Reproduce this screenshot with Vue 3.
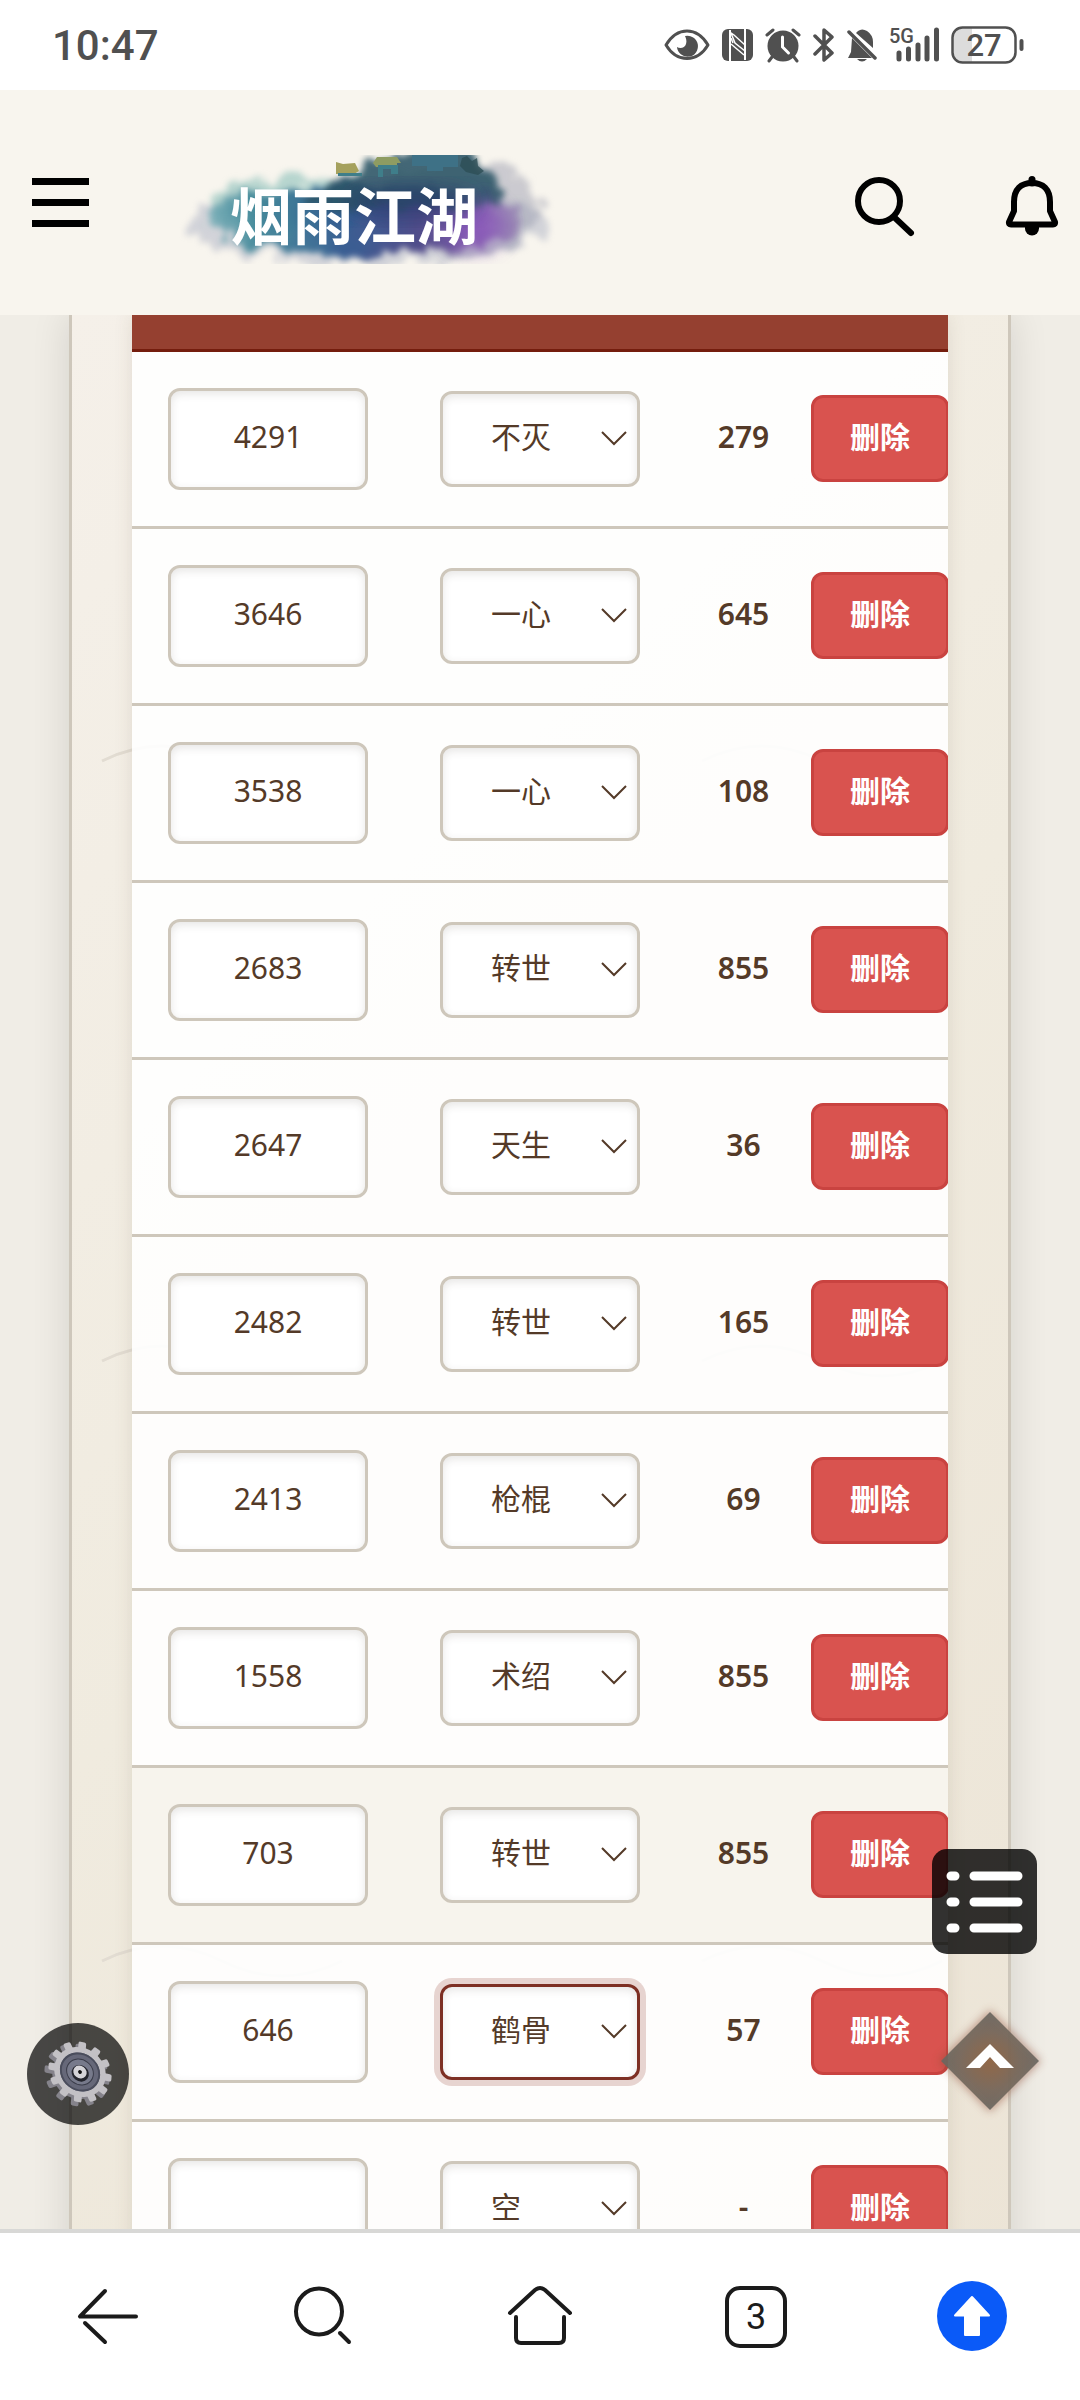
<script setup>
import { reactive, ref } from 'vue';

const options = ['空', '不灭', '一心', '转世', '天生', '枪棍', '术绍', '鹤骨'];

const rows = reactive([
    { id: 1, amount: '4291', kind: '不灭', cost: '279' },
    { id: 2, amount: '3646', kind: '一心', cost: '645' },
    { id: 3, amount: '3538', kind: '一心', cost: '108' },
    { id: 4, amount: '2683', kind: '转世', cost: '855' },
    { id: 5, amount: '2647', kind: '天生', cost: '36' },
    { id: 6, amount: '2482', kind: '转世', cost: '165' },
    { id: 7, amount: '2413', kind: '枪棍', cost: '69' },
    { id: 8, amount: '1558', kind: '术绍', cost: '855' },
    { id: 9, amount: '703', kind: '转世', cost: '855' },
    { id: 10, amount: '646', kind: '鹤骨', cost: '57' },
    { id: 11, amount: '', kind: '空', cost: '-' },
]);

const hoveredId = ref(9);
const focusedId = ref(10);

const teeth = Array.from({ length: 12 }, (_, i) => i * 30);

const removeRow = (id) => {
    const index = rows.findIndex((row) => row.id === id);
    if (index !== -1) rows.splice(index, 1);
};
</script>

<template>
    <div class="screen">
        <div class="status-bar">
            <span class="clock">10:47</span>
            <div class="status-icons">
                <svg width="46" height="36" viewBox="0 0 46 36">
                    <path d="M2 18C8 8 15 4 23 4s15 4 21 14c-6 10-13 13.500-21 13.500S8 28 2 18z" fill="none" stroke="#505050" stroke-width="3" stroke-linejoin="round" />
                    <path d="M21 9a10.500 10.500 0 1 1-8 11c3 2 8 1 9-3 1-3 0-6-1-8z" fill="#505050" />
                </svg>
                <svg width="31" height="36" viewBox="0 0 31 36">
                    <rect y="2" width="31" height="32" rx="6" fill="#505050" />
                    <path d="M8 3v31M23 2v31" stroke="#fff" stroke-width="2" />
                    <path d="M9 6l4 10 10 8v-6L12 8zM9 17l13 11M9 11l2 5" fill="none" stroke="#fff" stroke-width="1.500" />
                </svg>
                <svg width="36" height="36" viewBox="0 0 36 36">
                    <circle cx="18" cy="19" r="15.500" fill="#505050" />
                    <path d="M2 8l6-5M34 8l-6-5M7 30l-3 4M29 30l3 4" stroke="#505050" stroke-width="3" stroke-linecap="round" />
                    <path d="M17.500 10v10l6 6" fill="none" stroke="#fff" stroke-width="3" stroke-linecap="round" />
                </svg>
                <svg width="22" height="36" viewBox="0 0 22 36">
                    <path d="M2 9l17 17-8 7V3l8 7L2 27" fill="none" stroke="#505050" stroke-width="3.500" stroke-linejoin="round" stroke-linecap="round" />
                </svg>
                <svg width="30" height="36" viewBox="0 0 30 36">
                    <path d="M5 11l20 20H1l3-6zM11 4q4-3 9 0 6 4 6 11v6L9 6zM10 32h10q-5 5-10 0z" fill="#505050" />
                    <path d="M2 5l26 26" stroke="#505050" stroke-width="3.500" stroke-linecap="round" />
                </svg>
                <svg width="50" height="44" viewBox="0 -4 50 44" class="signal">
                    <text x="0" y="16">5G</text>
                    <path d="M10 26v6M19.500 22v10M29 18v14M38 11v21M47.500 3v29" stroke="#505050" stroke-width="5" stroke-linecap="round" />
                </svg>
                <svg width="73" height="38" viewBox="0 0 73 38" class="battery">
                    <path d="M21 2H11a9 9 0 0 0-9 9v16a9 9 0 0 0 9 9h10z" fill="#dcdcdc" />
                    <rect x="1.500" y="1.500" width="63" height="35" rx="10" fill="none" stroke="#505050" stroke-width="2.500" />
                    <path d="M70.500 15v8" stroke="#505050" stroke-width="4" stroke-linecap="round" />
                    <text x="33" y="30" text-anchor="middle">27</text>
                </svg>
            </div>
        </div>

        <header class="site-header">
            <button class="menu-btn" type="button" aria-label="菜单">
                <span></span>
                <span></span>
                <span></span>
            </button>
            <a class="logo" href="#">
                <svg width="400" height="125" viewBox="0 0 400 125">
                    <defs>
                        <filter id="ink" x="-20%" y="-40%" width="140%" height="180%" color-interpolation-filters="sRGB">
                            <feTurbulence type="fractalNoise" baseFrequency="0.050" numOctaves="4" seed="7" result="noise" />
                            <feDisplacementMap in="SourceGraphic" in2="noise" scale="32" xChannelSelector="R" yChannelSelector="G" />
                            <feGaussianBlur stdDeviation="3" />
                        </filter>
                        <filter id="soft" x="-40%" y="-40%" width="180%" height="180%">
                            <feGaussianBlur stdDeviation="11" />
                        </filter>
                        <linearGradient id="wash">
                            <stop offset="0" stop-color="#7fb3bb" />
                            <stop offset="0.160" stop-color="#3b8496" />
                            <stop offset="0.450" stop-color="#27508a" />
                            <stop offset="0.680" stop-color="#454083" />
                            <stop offset="0.880" stop-color="#7d58a8" />
                            <stop offset="1" stop-color="#9d8fb5" />
                        </linearGradient>
                        <clipPath id="edge">
                            <rect x="0" y="15" width="400" height="109" />
                        </clipPath>
                    </defs>
                    <g clip-path="url(#edge)">
                        <g filter="url(#ink)">
                            <ellipse cx="207" cy="84" rx="182" ry="40" fill="#8c95b2" opacity="0.350" />
                            <ellipse cx="297" cy="68" rx="84" ry="48" fill="#9497ab" opacity="0.450" />
                            <ellipse cx="128" cy="64" rx="78" ry="28" fill="#75b5b0" opacity="0.500" />
                            <ellipse cx="203" cy="80" rx="158" ry="36" fill="url(#wash)" opacity="0.900" />
                            <path d="M145 56Q205 26 250 12H308Q335 40 342 66L160 72z" fill="#2f5868" opacity="0.900" />
                        </g>
                        <ellipse cx="315" cy="86" rx="28" ry="24" fill="#9359c4" opacity="0.600" filter="url(#soft)" />
                        <ellipse cx="250" cy="62" rx="66" ry="14" fill="#27376a" opacity="0.700" filter="url(#soft)" />
                        <path d="M176 22l7 2 12-1 4 8-5 3h-18z" fill="#a5a15d" />
                        <path d="M217 17h20l4 6h-4v4h-21l-3-4z" fill="#8e9c62" />
                        <path d="M218 25h20v9h-7v-5h-8v8h-5zM178 33h24v3h-24z" fill="#3f7e8a" />
                        <path d="M252 15h46v12h-15v4h-16v-5h-15z" fill="#3e7186" />
                        <path d="M302 18l5-2 5 5 5-3 1 8 6 5-6 4-12-3-6-6z" fill="#2d4d55" opacity="0.800" />
                    </g>
                    <text x="194" y="100" text-anchor="middle">烟雨江湖</text>
                </svg>
            </a>
            <div class="header-actions">
                <button type="button" aria-label="搜索">
                    <svg width="64" height="68" viewBox="0 0 64 68" fill="none" stroke="#000">
                        <circle cx="27" cy="32" r="21" stroke-width="6" />
                        <path d="M42 48l17 16" stroke-width="6" stroke-linecap="round" />
                    </svg>
                </button>
                <button type="button" aria-label="通知">
                    <svg width="56" height="68" viewBox="0 0 56 68">
                        <path d="M10 33C10 20 17 14 28 14s18 6 18 19v9l5 11q.5 2.500-2 2.500H7q-2.500 0-2-2.500l5-11z" fill="none" stroke="#000" stroke-width="6" stroke-linejoin="round" />
                        <path d="M28 10.500V14" stroke="#000" stroke-width="7" stroke-linecap="round" />
                        <path d="M21 57h14v2.500a7 7 0 0 1-14 0z" />
                    </svg>
                </button>
            </div>
        </header>

        <main class="content">
            <section class="panel">
                <div class="table-wrap">
                    <table class="stats">
                        <colgroup>
                            <col class="col-wide">
                            <col class="col-wide">
                            <col class="col-cost">
                            <col>
                        </colgroup>
                        <thead>
                            <tr>
                                <th aria-label="数值"></th>
                                <th aria-label="类型"></th>
                                <th aria-label="消耗"></th>
                                <th aria-label="操作"></th>
                            </tr>
                        </thead>
                        <tbody>
                            <tr v-for="row in rows" :key="row.id" :class="{ hovered: row.id === hoveredId }">
                                <td class="cell-field">
                                    <input v-model="row.amount" class="field" type="text" inputmode="numeric" aria-label="数值">
                                </td>
                                <td class="cell-field">
                                    <div class="select-box">
                                        <select
                                            v-model="row.kind"
                                            :class="['field', { focused: row.id === focusedId }]"
                                            aria-label="类型"
                                            @focus="focusedId = row.id"
                                        >
                                            <option v-for="option in options" :key="option" :value="option">{{ option }}</option>
                                        </select>
                                        <svg class="chevron" width="26" height="16" viewBox="0 0 26 16">
                                            <path d="M1 1l12 12L25 1" fill="none" stroke="#543a28" stroke-width="2" />
                                        </svg>
                                    </div>
                                </td>
                                <td class="cost">{{ row.cost }}</td>
                                <td class="cell-action">
                                    <button class="delete-btn" type="button" @click="removeRow(row.id)">删除</button>
                                </td>
                            </tr>
                        </tbody>
                    </table>
                </div>
            </section>
        </main>

        <button class="float-btn toc-btn" type="button" aria-label="目录">
            <svg width="105" height="105" viewBox="0 0 105 105">
                <path d="M19 27h4M19 53h4M19 79h4M42 27h44M42 53h44M42 79h44" stroke="#fff" stroke-width="9" stroke-linecap="round" />
            </svg>
        </button>

        <button class="float-btn top-btn" type="button" aria-label="返回顶部">
            <svg width="120" height="120" viewBox="0 0 120 120">
                <defs>
                    <radialGradient id="ember">
                        <stop offset="0" stop-color="#8d6442" />
                        <stop offset="0.600" stop-color="#75685b" />
                        <stop offset="1" stop-color="#696660" />
                    </radialGradient>
                    <filter id="glow">
                        <feGaussianBlur stdDeviation="4" />
                    </filter>
                </defs>
                <path d="M60 9l51 51-51 51L9 60z" fill="#8c4a35" opacity="0.500" filter="url(#glow)" />
                <path d="M60 11l49 49-49 49L11 60z" fill="url(#ember)" opacity="0.920" />
                <path d="M60 43l24 24H70L60 56 50 67H36z" fill="#fff" />
            </svg>
        </button>

        <button class="float-btn gear-btn" type="button" aria-label="设置">
            <svg width="102" height="102" viewBox="0 0 102 102">
                <g transform="translate(50 52) rotate(38) scale(1 .88)">
                    <rect v-for="angle in teeth" :key="angle" x="-4" y="-34" width="8" height="14" rx="2" fill="#85838b" :transform="`rotate(${angle})`" />
                    <circle r="26" fill="#85838b" />
                </g>
                <g transform="translate(53 49) rotate(38) scale(1 .88)">
                    <rect v-for="angle in teeth" :key="angle" x="-4" y="-33" width="8" height="14" rx="2" fill="#c3c1c5" :transform="`rotate(${angle})`" />
                    <circle r="27" fill="#c3c1c5" />
                    <circle r="21" fill="#666879" />
                    <circle r="20" fill="none" stroke="#4a4d5c" stroke-width="2" />
                    <circle r="14" fill="#777a8b" stroke="#393b48" stroke-width="1" />
                    <circle cx="1" cy="1" r="9" fill="#24252d" />
                    <circle r="7" fill="#d5d4d8" />
                    <circle r="2" fill="#111" />
                </g>
            </svg>
        </button>

        <nav class="bottom-nav">
            <button type="button" aria-label="后退">
                <svg width="72" height="72" viewBox="0 0 72 72">
                    <path d="M33 10L8 35.500H64M13 42l20 19" />
                </svg>
            </button>
            <button type="button" aria-label="搜索">
                <svg width="72" height="72" viewBox="0 0 72 72">
                    <circle cx="31" cy="30.500" r="23" />
                    <path d="M52 52l9 9" />
                </svg>
            </button>
            <button type="button" aria-label="主页">
                <svg width="72" height="72" viewBox="0 0 72 72">
                    <path d="M6 32L31 9q5-4 10 0l25 23M12 36v21q0 5 5 5h38q5 0 5-5V36" />
                </svg>
            </button>
            <button type="button" aria-label="标签页">
                <span class="tab-count">3</span>
            </button>
            <button type="button" aria-label="向上">
                <svg class="up" width="72" height="72" viewBox="0 0 72 72">
                    <circle cx="36" cy="35" r="35" fill="#0a5af8" />
                    <path d="M36 16L53 34.500H43V54H29V34.500H19z" fill="#fff" stroke="#fff" />
                </svg>
            </button>
        </nav>
    </div>
</template>

<style>
body {
    margin: 0;
}
</style>

<style scoped>
.screen {
    --ink: #543a28;
    --line: #cec7bb;
    --cinnabar: #7d3024;
    --cream: #f8f5ee;
    display: flex;
    flex-direction: column;
    height: 100vh;
    background: #f0ede6;
    color: var(--ink);
    font-family: 'Noto Sans', 'Noto Sans CJK SC', sans-serif;
    font-size: 30px;
}

button {
    padding: 0;
    border: 0;
    background: none;
    color: inherit;
    font: inherit;
    cursor: pointer;
}

svg {
    display: block;
}

.status-bar {
    display: flex;
    flex: none;
    align-items: center;
    justify-content: space-between;
    height: 90px;
    padding: 0 56px 0 52px;
    background: #fff;
    color: #505050;
}

.clock {
    font-family: Roboto, sans-serif;
    font-size: 42px;
    font-weight: 500;
}

.status-icons {
    display: flex;
    align-items: center;
    gap: 12px;
}

.signal text {
    fill: #505050;
    font-family: Roboto, sans-serif;
    font-size: 20px;
    font-weight: 500;
}

.battery text {
    fill: #505050;
    font-family: Roboto, sans-serif;
    font-size: 31px;
    font-weight: 500;
}

.site-header {
    display: flex;
    flex: none;
    align-items: center;
    height: 225px;
    padding: 0 20px 0 32px;
    background: var(--cream);
}

.menu-btn {
    display: grid;
    gap: 14px;
    width: 57px;
}

.menu-btn span {
    height: 7px;
    background: #000;
}

.logo {
    margin-left: 71px;
}

.logo text {
    fill: #fff;
    font-family: 'Noto Sans CJK SC', sans-serif;
    font-size: 62px;
    font-weight: 700;
}

.header-actions {
    display: flex;
    gap: 88px;
    margin-left: auto;
}

.content {
    flex: 1;
    min-height: 0;
    overflow: hidden;
}

.panel {
    margin: 0 69px;
    padding: 0 60px;
    border: solid var(--line);
    border-width: 0 3px;
    background:
        url("data:image/svg+xml,%3Csvg xmlns='http://www.w3.org/2000/svg' width='600' height='600'%3E%3Cpath d='M30 446q60-30 120 0t120 0' fill='none' stroke='%23e2dcd2' stroke-width='3'/%3E%3C/svg%3E"),
        linear-gradient(135deg, #f5f0e9 0%, #f0ebdf 50%, #ece4d6 100%);
    box-shadow: 0 0 36px rgba(0, 0, 0, 0.12);
}

.table-wrap {
    overflow: hidden;
    background: rgba(255, 255, 255, 0.9);
    box-shadow: 0 0 18px rgba(90, 70, 40, 0.12);
}

.stats {
    width: 100%;
    border-collapse: separate;
    border-spacing: 0;
    table-layout: fixed;
}

.col-wide {
    width: 33.3333%;
}

.col-cost {
    width: 135px;
}

.stats th {
    height: 34px;
    padding: 0;
    border-bottom: 3px solid #741d0d;
    background: #954030;
}

.stats td {
    box-sizing: border-box;
    height: 177px;
    padding: 0;
    border-bottom: 3px solid var(--line);
    text-align: center;
    vertical-align: middle;
}

.stats .cell-field {
    padding: 0 36px;
}

.hovered td {
    background: #f7f4ed;
}

.field {
    display: block;
    box-sizing: border-box;
    width: 100%;
    height: 102px;
    margin: 0;
    padding: 0 12px 6px;
    border: 3px solid var(--line);
    border-radius: 12px;
    outline: 0;
    background: #fff;
    box-shadow: inset 0 3px 9px rgba(60, 50, 40, 0.12);
    color: var(--ink);
    font: inherit;
    text-align: center;
}

.select-box {
    position: relative;
}

select.field {
    height: 96px;
    padding: 0 48px 6px;
    appearance: none;
    text-align: left;
}

.field:focus,
.field.focused {
    border-color: var(--cinnabar);
    box-shadow: 0 0 0 6px rgba(140, 48, 36, 0.2), inset 0 3px 9px rgba(60, 50, 40, 0.12);
}

.chevron {
    position: absolute;
    top: 40px;
    right: 13px;
    pointer-events: none;
}

.stats .cost {
    padding-bottom: 6px;
    font-weight: 600;
}

.stats .cell-action {
    overflow: hidden;
    padding-bottom: 2px;
}

.delete-btn {
    box-sizing: border-box;
    display: block;
    width: 138px;
    height: 87px;
    padding-bottom: 6px;
    border: 3px solid #c94340;
    border-radius: 12px;
    background: #d9534f;
    color: #fff;
    font-weight: 600;
}

.float-btn {
    position: fixed;
}

.toc-btn {
    right: 43px;
    bottom: 446px;
    border-radius: 15px;
    background: rgba(0, 0, 0, 0.8);
}

.top-btn {
    right: 30px;
    bottom: 279px;
}

.gear-btn {
    bottom: 275px;
    left: 27px;
    border-radius: 50%;
    background: rgba(0, 0, 0, 0.7);
}

.bottom-nav {
    display: grid;
    flex: none;
    grid-template-columns: repeat(5, 1fr);
    height: 167px;
    border-top: 4px solid #d8d8d6;
    background: #fff;
}

.bottom-nav button {
    display: grid;
    place-items: center;
}

.bottom-nav svg:not(.up) {
    fill: none;
    stroke: #1b1b1b;
    stroke-width: 4;
    stroke-linecap: round;
    stroke-linejoin: round;
}

.up {
    stroke-width: 2;
    stroke-linejoin: round;
}

.tab-count {
    box-sizing: border-box;
    width: 62px;
    height: 62px;
    border: 4px solid #1b1b1b;
    border-radius: 15px;
    color: #1b1b1b;
    font-family: Roboto, sans-serif;
    font-size: 36px;
    line-height: 54px;
}
</style>
